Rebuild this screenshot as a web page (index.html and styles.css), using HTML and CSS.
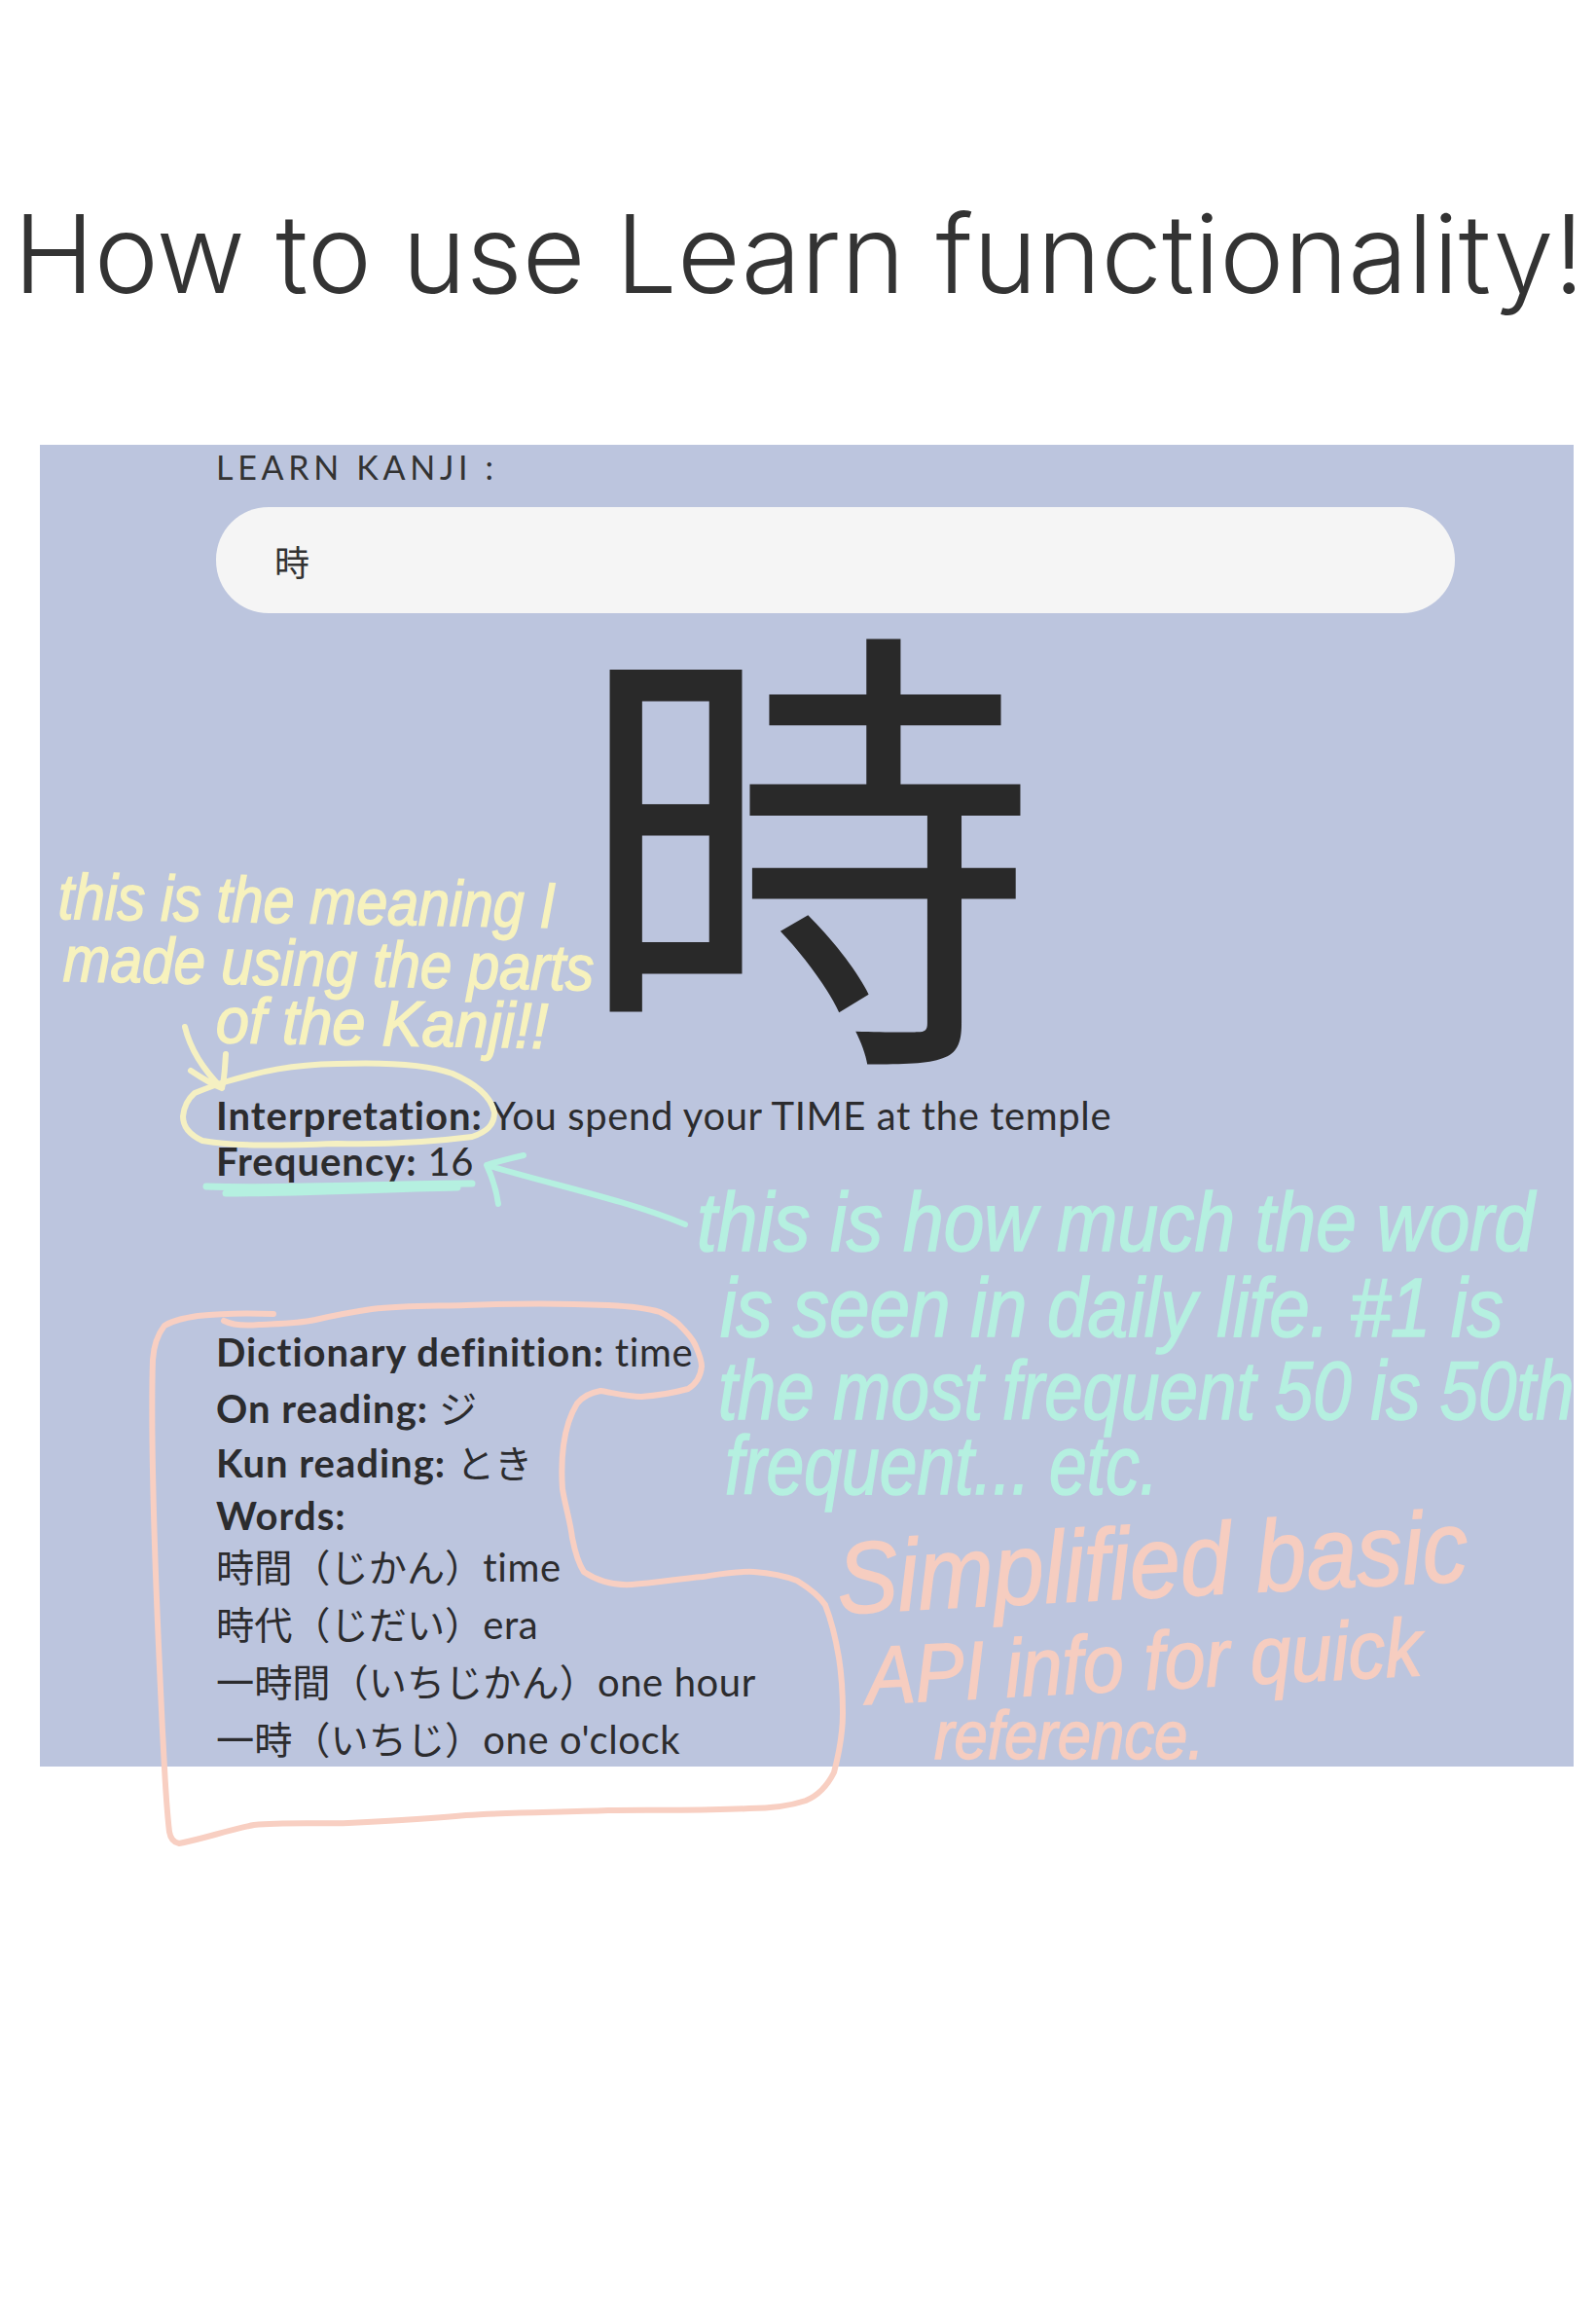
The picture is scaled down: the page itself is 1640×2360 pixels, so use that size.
FILE: index.html
```html
<!DOCTYPE html>
<html lang="en">
<head>
<meta charset="utf-8">
<title>How to use Learn functionality!</title>
<link rel="stylesheet" href="styles.css">
</head>
<body>
<main class="page">
  <h1 class="title">How to use Learn functionality!</h1>
  <section class="panel">
    <label class="field-label" for="kanji">LEARN KANJI :</label>
    <input class="field" id="kanji" type="text" value="時" readonly>
    <div class="kanji">時</div>
    <div class="summary">
      <p class="row"><b>Interpretation:</b> You spend your TIME at the temple</p>
      <p class="row"><b>Frequency:</b> 16</p>
    </div>
    <div class="details">
      <p class="line"><b>Dictionary definition:</b> time</p>
      <p class="line"><b>On reading:</b> <span class="ja">ジ</span></p>
      <p class="line"><b>Kun reading:</b> <span class="ja">とき</span></p>
      <p class="line words-label"><b>Words:</b></p>
      <p class="line word"><span class="ja">時間（じかん）</span>time</p>
      <p class="line word"><span class="ja">時代（じだい）</span>era</p>
      <p class="line word"><span class="ja">一時間（いちじかん）</span>one hour</p>
      <p class="line word"><span class="ja">一時（いちじ）</span>one o'clock</p>
    </div>
  </section>

  <svg class="ink" viewBox="0 0 1640 2360" aria-hidden="true">
    <g class="ink-yellow">
      <path d="M230 1112C270 1100 300 1094 346 1093C400 1091 440 1094 465 1103C490 1114 505 1128 508 1143C508 1156 500 1163 485 1168C430 1175 390 1176 346 1175C290 1177 240 1178 208 1172C195 1166 188 1157 188 1147C189 1137 192 1130 200 1123C210 1119 220 1115 230 1112Z"/>
      <path d="M190 1055C196 1080 210 1100 228 1118M196 1100C208 1108 218 1114 228 1118C231 1108 231 1095 232 1083"/>
    </g>
    <g class="ink-teal">
      <path class="ink-thick" d="M212 1219C300 1222 400 1216 485 1216"/>
      <path class="ink-thick" d="M232 1226C300 1226 380 1222 470 1220"/>
      <path d="M704 1258C640 1232 570 1218 500 1197M538 1187C525 1190 512 1193 500 1197C506 1210 510 1222 512 1237"/>
    </g>
    <path class="ink-pink" d="M230 1357C240 1362 255 1362 266 1361C285 1360 305 1360 324 1356C345 1351 362 1348 382 1345C415 1341 445 1342 479 1341C530 1339 580 1339 625 1341C645 1342 665 1344 678 1348C687 1352 692 1356 697 1360C705 1368 711 1374 714 1381C718 1390 721 1396 721 1404C720 1414 715 1422 707 1427C692 1431 675 1434 659 1435C645 1435 630 1431 617 1429C605 1431 598 1436 593 1442C585 1455 581 1470 579 1485C577 1500 577 1515 578 1530C581 1548 586 1563 588 1580C591 1595 594 1606 600 1615C615 1625 632 1629 649 1628C675 1626 698 1622 722 1620C742 1617 758 1614 775 1615C790 1616 806 1619 819 1624C832 1632 842 1640 848 1649C855 1667 859 1685 862 1703C865 1722 866 1741 866 1760C866 1782 862 1802 857 1821C850 1835 840 1845 828 1850C810 1856 790 1858 770 1858C720 1861 670 1859 625 1860C575 1862 525 1862 479 1865C440 1869 400 1871 358 1873C325 1874 292 1872 261 1875C235 1880 210 1889 184 1894C178 1893 175 1888 174 1882C170 1848 169 1813 167 1779C164 1715 161 1652 159 1588C157 1525 155 1460 157 1397C158 1382 162 1371 169 1362C179 1356 191 1354 203 1352C230 1349 256 1349 281 1350"/>
  </svg>

  <div class="note note-yellow">
    <span class="hand y1">this is the meaning I</span>
    <span class="hand y2">made using the parts</span>
    <span class="hand y3">of the Kanji!!</span>
  </div>
  <div class="note note-teal">
    <span class="hand t1">this is how much the word</span>
    <span class="hand t2">is seen in daily life. #1 is</span>
    <span class="hand t3">the most frequent 50 is 50th</span>
    <span class="hand t4">frequent... etc.</span>
  </div>
  <div class="note note-pink">
    <span class="hand p1">Simplified basic</span>
    <span class="hand p2">API info for quick</span>
    <span class="hand p3">reference.</span>
  </div>
</main>
</body>
</html>
```
FILE: styles.css
```css
* { box-sizing: border-box; }
html, body { margin: 0; background: #fff; }
.page {
  position: relative;
  width: 1640px;
  height: 2360px;
  overflow: hidden;
  padding-top: 197px;
  color: #333;
}
.title {
  margin: 0 0 133px;
  height: 127px;
  padding-left: 14px;
  font: 300 111.7px/127px Inter, "Noto Sans CJK JP", sans-serif;
  color: #333;
  white-space: nowrap;
}
.panel {
  margin-left: 41px;
  width: 1576px;
  height: 1358px;
  padding-left: 181px;
  background: #bcc5de;
  font-family: Lato, "Noto Sans CJK JP", sans-serif;
  color: #2c2c2e;
}
.field-label {
  display: block;
  height: 46px;
  font-size: 34px;
  line-height: 46px;
  letter-spacing: 4.7px;
  color: #333;
}
.field {
  display: block;
  width: 1273px;
  height: 109px;
  margin-top: 18px;
  padding: 0 60px;
  border: 0;
  border-radius: 54px;
  outline: 0;
  background: #f5f5f5;
  font: 36px "Noto Sans CJK JP", sans-serif;
  color: #333;
}
.kanji {
  width: 1574px;
  height: 490px;
  margin: -26px 0 0 -181px;
  text-align: center;
  font: 475px/490px "Noto Sans CJK JP", sans-serif;
  color: #292929;
}
.summary { margin-top: 29px; }
.row, .line {
  margin: 0;
  white-space: nowrap;
  font-size: 40px;
  letter-spacing: .6px;
}
.row { height: 47px; line-height: 47px; }
.details { margin-top: 144px; }
.line { height: 56px; line-height: 56px; }
.line.words-label { height: 50px; }
.line.word { height: 59px; line-height: 59px; }
.ja { font-family: "Noto Sans CJK JP", sans-serif; font-size: 39.2px; letter-spacing: 0; }
b { font-weight: 700; letter-spacing: 1px; }

.ink {
  position: absolute;
  inset: 0;
  width: 1640px;
  height: 2360px;
  fill: none;
  stroke-linecap: round;
  stroke-linejoin: round;
  stroke-width: 6px;
}
.ink-yellow { stroke: #f5f0c2; }
.ink-teal { stroke: #b5f0e0; }
.ink-pink { stroke: #f8cfc2; }
.ink-thick { stroke-width: 7px; }

.note { position: absolute; inset: 0; }
.note-yellow { color: #f7f2bd; }
.note-teal { color: #b5f0e0; }
.note-pink { color: #f6cdc0; }
.hand {
  position: absolute;
  white-space: nowrap;
  font: italic 400 74px/1 "Liberation Sans", sans-serif;
  -webkit-text-stroke: 1.5px currentColor;
  transform-origin: left center;
}
.y1 { left: 60px; top: 888px; font-size: 66px; transform: rotate(1deg) scaleX(.87); }
.y2 { left: 65px; top: 952px; font-size: 66px; transform: rotate(1deg) scaleX(.885); }
.y3 { left: 222px; top: 1015px; font-size: 66px; transform: rotate(1deg) scaleX(.93); }
.t1 { left: 716px; top: 1212px; font-size: 86px; transform: scaleX(.87); }
.t2 { left: 740px; top: 1300px; font-size: 86px; transform: scaleX(.868); }
.t3 { left: 738px; top: 1385px; font-size: 86px; transform: scaleX(.825); }
.t4 { left: 745px; top: 1462px; font-size: 86px; transform: scaleX(.81); }
.p1 { left: 860px; top: 1570px; font-size: 104px; transform: rotate(-3deg) scaleX(.898); }
.p2 { left: 890px; top: 1680px; font-size: 84px; transform: rotate(-3deg) scaleX(.9); }
.p3 { left: 960px; top: 1748px; font-size: 70px; transform: scaleX(.88); }
```
